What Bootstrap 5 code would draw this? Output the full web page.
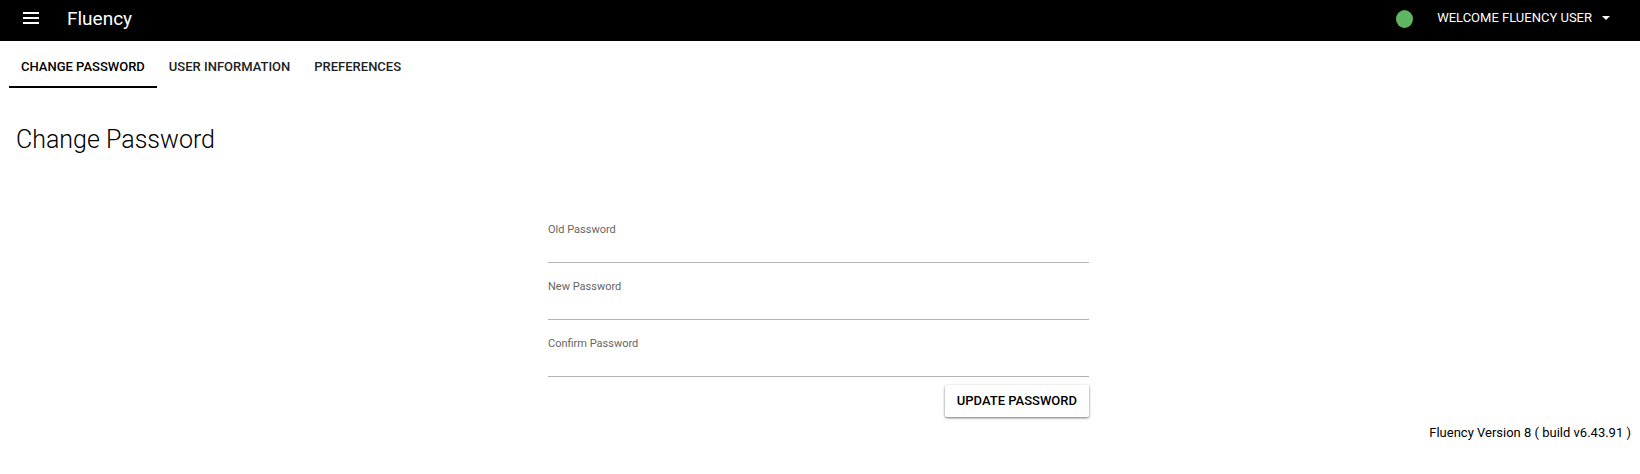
<!DOCTYPE html>
<html lang="en">
<head>
<meta charset="utf-8">
<meta name="viewport" content="width=device-width, initial-scale=1">
<title>Fluency - Change Password</title>
<link href="https://cdn.jsdelivr.net/npm/bootstrap@5.3.0/dist/css/bootstrap.min.css" rel="stylesheet">
<style>
  body { font-family: Roboto, "Liberation Sans", sans-serif; font-size: 13px; line-height: 20px; color: #000; background: #fff; }
  .topbar { height: 41px; padding: 0 28px 5px 22px; background: #000; }
  .topbar .btn { font-size: 13px; line-height: 20px; color: #fff; }
  .brand { font-size: 19px; line-height: 24px; color: #fff; margin-left: 27px; padding-top: 1px; }
  .status { width: 17px; height: 18px; background: #5fb562; margin: 2px 24px 0 0; }
  .tabs { padding: 0 9px; }
  .tabs .nav-link { padding: 16px 12px 9px; border-bottom: 2px solid transparent; font-weight: 500; color: #222; }
  .tabs .nav-link.active { border-color: #000; color: #000; }
  .page-title { font-size: 25px; line-height: 32px; font-weight: 300; margin: 36px 16px 65px; }
  .form-wrap { padding: 0 10px 0 7px; }
  .field { height: 57px; }
  .field label { display: block; font-size: 11px; line-height: 18px; color: #666; }
  .field input { height: 24px; font-size: 14px; border: 0; border-bottom: 1px solid #b3b3b3; border-radius: 0; padding: 0; background: transparent; }
  .field input:focus { box-shadow: none; border-color: #000; }
  .btn-update { font-size: 13px; line-height: 20px; font-weight: 500; padding: 6px 12px; border: 0; border-radius: 2px; background: #fff; color: #000; box-shadow: 0 1px 3px rgba(0,0,0,.4), 0 1px 2px rgba(0,0,0,.2); margin-top: -7px; }
  .version { font-size: 13px; padding: 6px 9px 0; }
</style>
</head>
<body>
<header class="topbar d-flex align-items-center">
  <button type="button" class="btn p-0 border-0 d-flex" aria-label="Menu">
    <svg width="18" height="14" viewBox="0 0 18 14" fill="none" stroke="#fff" stroke-width="2" aria-hidden="true"><path d="M1 2h16M1 7h16M1 12h16"/></svg>
  </button>
  <a href="#" class="brand text-decoration-none">Fluency</a>
  <span class="status rounded-circle ms-auto" role="img" aria-label="Online"></span>
  <button type="button" class="btn p-0 border-0 d-flex align-items-center gap-2">
    <span>WELCOME FLUENCY USER</span>
    <svg width="12" height="6" viewBox="0 0 12 6" aria-hidden="true"><path d="M2 1h8L6 5z" fill="#fff"/></svg>
  </button>
</header>
<nav class="nav tabs" aria-label="Account">
  <a class="nav-link active" aria-current="page" href="#">CHANGE PASSWORD</a>
  <a class="nav-link" href="#">USER INFORMATION</a>
  <a class="nav-link" href="#">PREFERENCES</a>
</nav>
<main>
  <h1 class="page-title">Change Password</h1>
  <div class="form-wrap">
    <div class="row g-0 justify-content-center">
      <form class="col-4">
        <div class="field"><label for="old">Old Password</label><input class="form-control" type="password" id="old"></div>
        <div class="field"><label for="new">New Password</label><input class="form-control" type="password" id="new"></div>
        <div class="field"><label for="confirm">Confirm Password</label><input class="form-control" type="password" id="confirm"></div>
        <div class="d-flex justify-content-end"><button type="submit" class="btn btn-update">UPDATE PASSWORD</button></div>
      </form>
    </div>
  </div>
</main>
<footer class="version text-end">Fluency Version 8 ( build v6.43.91 )</footer>
<script src="https://cdn.jsdelivr.net/npm/bootstrap@5.3.0/dist/js/bootstrap.bundle.min.js"></script>
</body>
</html>
